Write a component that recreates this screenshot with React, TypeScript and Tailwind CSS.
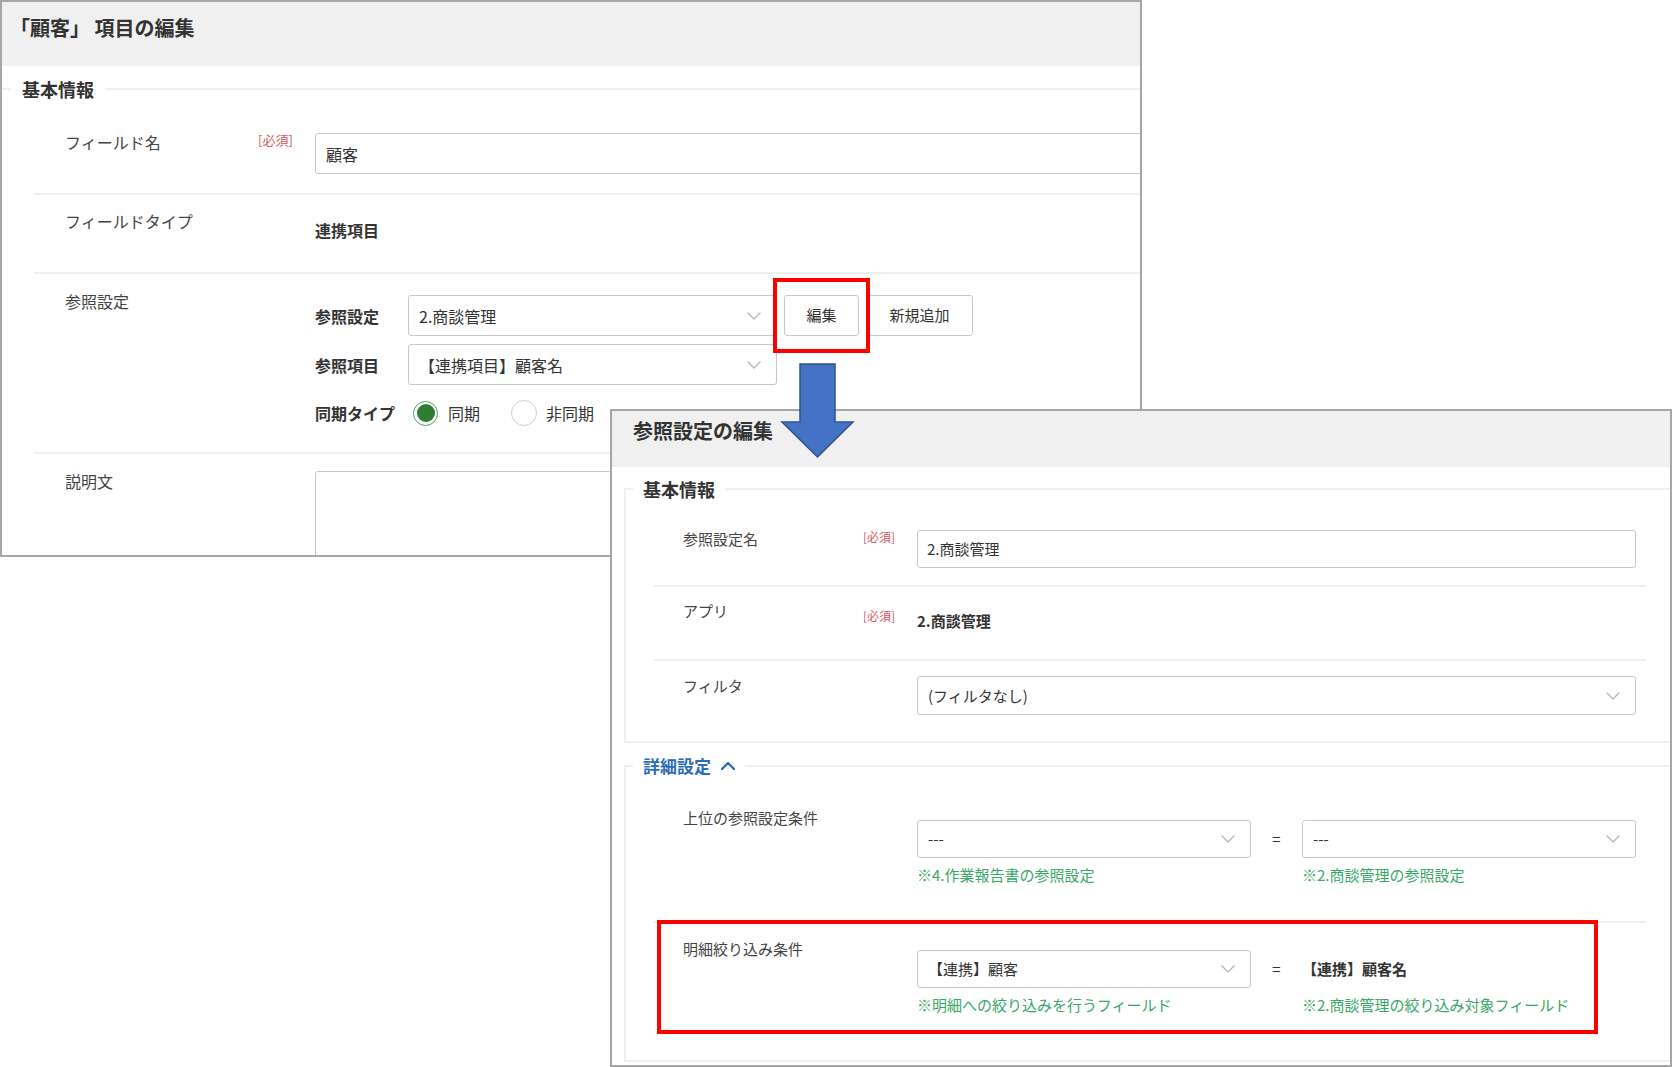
import React from "react";

function Chevron({ up = false, className = "" }: { up?: boolean; className?: string }) {
  return (
    <svg width="14" height="8" viewBox="0 0 14 8" className={className} fill="none">
      <polyline
        points={up ? "1,7 7,1 13,7" : "1,1 7,7 13,1"}
        stroke="currentColor"
        strokeWidth={up ? 2.4 : 1.4}
        strokeLinecap="round"
        strokeLinejoin="round"
      />
    </svg>
  );
}

function Select({ value, h = "h-[41px]", text = "text-[15px]" }: { value: string; h?: string; text?: string }) {
  return (
    <div className={`flex items-center justify-between ${h} border border-[#c8c8c8] rounded-[3px] bg-white pl-[10px] pr-[15px]`}>
      <span className={`${text} leading-5 text-[#333]`}>{value}</span>
      <Chevron className="text-[#b8b8b8]" />
    </div>
  );
}

function Required({ size = "text-[13px]" }: { size?: string }) {
  return <span className={`${size} leading-4 text-[#d05a5a]`}>[必須]</span>;
}

function Radio({ checked }: { checked: boolean }) {
  return checked ? (
    <span className="flex items-center justify-center w-[25px] h-[25px] rounded-full border border-[#4aa35a] bg-white">
      <span className="block w-[18px] h-[18px] rounded-full bg-[#2e7d32]" />
    </span>
  ) : (
    <span className="block w-[26px] h-[26px] rounded-full border border-[#d0d0d0] bg-white" />
  );
}

// 「顧客」 項目の編集 window
function FieldWindow() {
  return (
    <div className="absolute left-0 top-0 w-[1142px] h-[557px] border-2 border-[#a6a6a6] bg-white overflow-hidden">
      <div className="h-[64px] bg-[#f0f0f0] pl-[8px] pt-[12px]">
        <h1 className="text-[20px] font-bold leading-7 text-[#333]">「顧客」 項目の編集</h1>
      </div>

      <fieldset className="mt-[11px] border-t-2 border-[#efefef] -mr-[60px]">
        <legend className="ml-[9px] px-[11px] text-[18px] font-bold leading-6 text-[#333]">基本情報</legend>

        <div className="ml-[32px] text-[#444]">
          {/* フィールド名 */}
          <div className="flex">
            <div className="w-[281px] shrink-0 flex items-start pl-[31px] pt-[31px]">
              <span className="w-[193px] text-[16px] leading-5">フィールド名</span>
              <Required />
            </div>
            <div className="flex-1 pt-[32px] pb-[19px]">
              <div className="flex items-center h-[41px] border border-[#c8c8c8] rounded-[3px] pl-[10px] text-[16px] text-[#333]">
                顧客
              </div>
            </div>
          </div>

          {/* フィールドタイプ */}
          <div className="flex border-t-2 border-[#efefef]">
            <div className="w-[281px] shrink-0 pl-[31px] pt-[14px]">
              <span className="text-[16px] leading-5">フィールドタイプ</span>
            </div>
            <div className="flex-1 pt-[25px] pb-[32px] text-[16px] leading-5 font-bold text-[#333]">連携項目</div>
          </div>

          {/* 参照設定 */}
          <div className="flex border-t-2 border-[#efefef]">
            <div className="w-[281px] shrink-0 pl-[31px] pt-[15px]">
              <span className="text-[16px] leading-5">参照設定</span>
            </div>
            <div className="flex-1 pt-[21px] pb-[26px] text-[#333]">
              <div className="flex items-center">
                <span className="w-[93px] text-[16px] font-bold leading-5">参照設定</span>
                <div className="w-[369px]">
                  <Select value="2.商談管理" text="text-[16px]" />
                </div>
                <button className="ml-[7px] w-[75px] h-[41px] border border-[#c8c8c8] rounded-[3px] bg-white text-[15px]">
                  編集
                </button>
                <button className="ml-[7px] w-[107px] h-[41px] border border-[#c8c8c8] rounded-[3px] bg-white text-[15px]">
                  新規追加
                </button>
              </div>
              <div className="flex items-center mt-[8px]">
                <span className="w-[93px] text-[16px] font-bold leading-5">参照項目</span>
                <div className="w-[369px]">
                  <Select value="【連携項目】顧客名" text="text-[16px]" />
                </div>
              </div>
              <div className="flex items-center mt-[15px] h-[26px]">
                <span className="w-[93px] text-[16px] font-bold leading-5">同期タイプ</span>
                <span className="ml-[5px]">
                  <Radio checked />
                </span>
                <span className="ml-[10px] text-[16px] leading-5">同期</span>
                <span className="ml-[31px]">
                  <Radio checked={false} />
                </span>
                <span className="ml-[9px] text-[16px] leading-5">非同期</span>
              </div>
            </div>
          </div>

          {/* 説明文 */}
          <div className="flex border-t-2 border-[#efefef]">
            <div className="w-[281px] shrink-0 pl-[31px] pt-[15px]">
              <span className="text-[16px] leading-5">説明文</span>
            </div>
            <div className="flex-1 pt-[17px]">
              <div className="h-[110px] border border-[#c8c8c8] rounded-[3px]" />
            </div>
          </div>
        </div>
      </fieldset>
    </div>
  );
}

// 参照設定の編集 window
function ReferenceWindow() {
  return (
    <div className="absolute left-[610px] top-[409px] w-[1062px] h-[658px] border-2 border-[#a6a6a6] bg-white overflow-hidden">
      <div className="h-[56px] bg-[#f0f0f0] pl-[21px] pt-[6px]">
        <h2 className="text-[20px] font-bold leading-7 text-[#333]">参照設定の編集</h2>
      </div>

      {/* 基本情報 */}
      <fieldset className="mt-[10px] ml-[12px] -mr-[4px] border-2 border-[#efefef]">
        <legend className="ml-[7px] px-[10px] text-[18px] font-bold leading-6 text-[#333]">基本情報</legend>
        <div className="ml-[28px] mr-[26px] text-[#444]">
          <div className="flex">
            <div className="w-[263px] shrink-0 flex items-start pl-[29px] pt-[28px]">
              <span className="w-[180px] text-[15px] leading-5">参照設定名</span>
              <Required size="text-[12px]" />
            </div>
            <div className="flex-1 pt-[29px] pb-[17px] pr-[10px]">
              <div className="flex items-center h-[38px] border border-[#c8c8c8] rounded-[3px] pl-[9px] text-[15px] text-[#333]">
                2.商談管理
              </div>
            </div>
          </div>

          <div className="flex border-t-2 border-[#efefef]">
            <div className="w-[263px] shrink-0 flex items-start pl-[29px] pt-[14px]">
              <span className="w-[180px] text-[15px] leading-5">アプリ</span>
              <span className="pt-[1px]">
                <Required size="text-[12px]" />
              </span>
            </div>
            <div className="flex-1 pt-[24px] pb-[28px] text-[15px] leading-5 font-bold text-[#333]">2.商談管理</div>
          </div>

          <div className="flex border-t-2 border-[#efefef]">
            <div className="w-[263px] shrink-0 pl-[29px] pt-[12px]">
              <span className="text-[15px] leading-5">フィルタ</span>
            </div>
            <div className="flex-1 pt-[15px] pb-[26px] pr-[10px]">
              <Select value="(フィルタなし)" h="h-[39px]" />
            </div>
          </div>
        </div>
      </fieldset>

      {/* 詳細設定 */}
      <fieldset className="mt-[11px] ml-[12px] -mr-[4px] border-2 border-[#efefef]">
        <legend className="ml-[7px] px-[10px] leading-6">
          <span className="flex items-center gap-[10px] text-[17px] font-bold text-[#2b6cb8]">
            詳細設定
            <Chevron up />
          </span>
        </legend>
        <div className="ml-[28px] mr-[26px] text-[#444]">
          <div className="flex">
            <div className="w-[263px] shrink-0 pl-[29px] pt-[27px]">
              <span className="text-[15px] leading-5">上位の参照設定条件</span>
            </div>
            <div className="flex-1 flex pt-[42px] pb-[36px] pr-[10px]">
              <div className="flex-1">
                <Select value="---" h="h-[38px]" />
                <p className="mt-[7px] text-[15px] leading-5 text-[#37a866]">※4.作業報告書の参照設定</p>
              </div>
              <div className="w-[51px] h-[38px] flex items-center justify-center text-[15px] text-[#333]">=</div>
              <div className="flex-1">
                <Select value="---" h="h-[38px]" />
                <p className="mt-[7px] text-[15px] leading-5 text-[#37a866]">※2.商談管理の参照設定</p>
              </div>
            </div>
          </div>

          <div className="flex border-t-2 border-[#efefef]">
            <div className="w-[263px] shrink-0 pl-[29px] pt-[13px]">
              <span className="text-[15px] leading-5">明細絞り込み条件</span>
            </div>
            <div className="flex-1 flex pt-[27px] pb-[45px] pr-[10px]">
              <div className="flex-1">
                <Select value="【連携】顧客" h="h-[38px]" />
                <p className="mt-[7px] text-[15px] leading-5 text-[#37a866]">※明細への絞り込みを行うフィールド</p>
              </div>
              <div className="w-[51px] h-[38px] flex items-center justify-center text-[15px] text-[#333]">=</div>
              <div className="flex-1">
                <div className="h-[38px] flex items-center text-[15px] font-bold text-[#333]">【連携】顧客名</div>
                <p className="mt-[7px] text-[15px] leading-5 text-[#37a866]">※2.商談管理の絞り込み対象フィールド</p>
              </div>
            </div>
          </div>
        </div>
      </fieldset>
    </div>
  );
}

export default function App() {
  return (
    <div className="relative w-[1672px] h-[1067px] bg-white overflow-hidden font-['Noto_Sans_CJK_JP','Liberation_Sans',sans-serif]">
      <FieldWindow />
      <ReferenceWindow />

      {/* annotations */}
      <div className="absolute left-[773px] top-[278px] w-[97px] h-[75px] border-4 border-[#ff0000]" />
      <div className="absolute left-[657px] top-[920px] w-[941px] h-[114px] border-4 border-[#ff0000]" />
      <svg className="absolute left-[780px] top-[362px]" width="76" height="98" viewBox="0 0 76 98">
        <polygon
          points="20,2 55,2 55,60 73,60 37.5,95 2,60 20,60"
          fill="#4472c4"
          stroke="#2f528f"
          strokeWidth="1.5"
          strokeLinejoin="miter"
        />
      </svg>
    </div>
  );
}
